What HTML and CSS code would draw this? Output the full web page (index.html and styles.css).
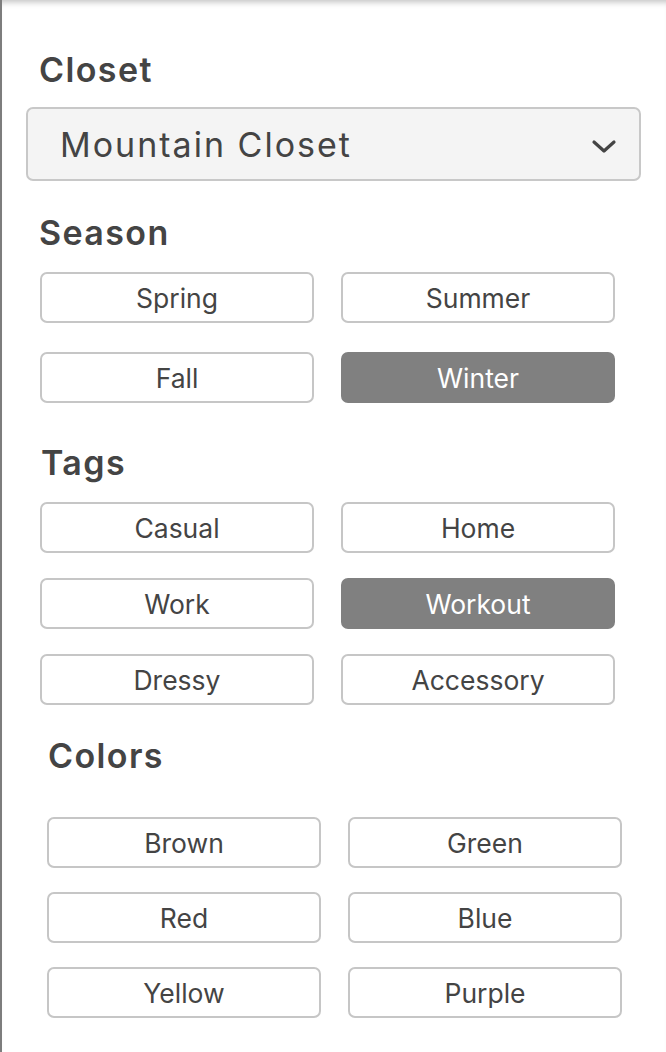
FILE: index.html
```html
<!DOCTYPE html>
<html>
<head>
<meta charset="utf-8">
<link rel="stylesheet" href="styles.css">
</head>
<body>
<div class="panel">
  <h2 class="heading h-closet">Closet</h2>
  <div class="select">
    <span class="select-text">Mountain Closet</span>
    <svg class="chevron" width="26" height="16" viewBox="0 0 26 16"><path d="M3 3 L13 12 L23 3" fill="none" stroke="#444" stroke-width="3.2" stroke-linecap="round" stroke-linejoin="round"/></svg>
  </div>

  <h2 class="heading h-season">Season</h2>
  <div class="grid g-season">
    <button class="chip">Spring</button>
    <button class="chip">Summer</button>
    <button class="chip">Fall</button>
    <button class="chip on">Winter</button>
  </div>

  <h2 class="heading h-tags">Tags</h2>
  <div class="grid g-tags">
    <button class="chip">Casual</button>
    <button class="chip">Home</button>
    <button class="chip">Work</button>
    <button class="chip on">Workout</button>
    <button class="chip">Dressy</button>
    <button class="chip">Accessory</button>
  </div>

  <h2 class="heading h-colors">Colors</h2>
  <div class="grid g-colors">
    <button class="chip">Brown</button>
    <button class="chip">Green</button>
    <button class="chip">Red</button>
    <button class="chip">Blue</button>
    <button class="chip">Yellow</button>
    <button class="chip">Purple</button>
  </div>
</div>
</body>
</html>
```

FILE: styles.css
```css
html, body {
  margin: 0;
  padding: 0;
  background: #ffffff;
}
body {
  font-family: Inter, "Noto Sans", sans-serif;
  color: #444444;
}
.panel {
  min-height: 1052px;
  box-sizing: border-box;
  border-left: 2px solid #7d7d7d;
  box-shadow: inset 0 7px 6px -5px rgba(0, 0, 0, 0.25);
  padding: 50px 0 0 0;
}
.heading {
  margin: 0;
  font-size: 34px;
  line-height: 40px;
  font-weight: 600;
  letter-spacing: 1.4px;
  color: #444444;
}
.h-closet { margin-left: 37px; }
.select {
  margin: 17px 0 0 24px;
  width: 615px;
  height: 74px;
  box-sizing: border-box;
  border: 2px solid #c8c8c8;
  border-radius: 7px;
  background: #f4f4f4;
  display: flex;
  align-items: center;
  justify-content: space-between;
  padding: 0 22px 0 32px;
}
.select-text {
  font-size: 34px;
  letter-spacing: 2px;
  color: #444444;
}
.chevron { margin-top: 6px; }
.h-season { margin: 32px 0 0 37px; }
.h-tags { margin: 40px 0 0 39px; }
.h-colors { margin: 31px 0 0 46px; }
.grid {
  display: grid;
  grid-template-columns: 274px 274px;
  column-gap: 27px;
}
.g-season { margin: 19px 0 0 38px; row-gap: 29px; }
.g-tags { margin: 19px 0 0 38px; row-gap: 25px; }
.g-colors { margin: 41px 0 0 45px; row-gap: 24px; }
.chip {
  height: 51px;
  box-sizing: border-box;
  border: 2px solid #c6c6c6;
  border-radius: 7px;
  background: #ffffff;
  font-family: Inter, "Noto Sans", sans-serif;
  font-size: 26.5px;
  color: #444444;
  padding: 0;
}
.chip.on {
  background: #808080;
  border-color: #808080;
  color: #ffffff;
}
```
